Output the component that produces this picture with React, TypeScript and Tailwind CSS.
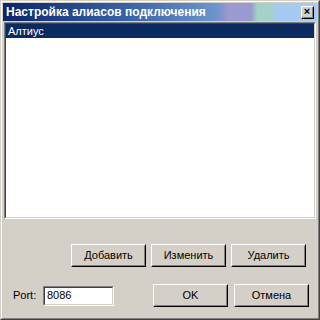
import React from 'react';

const font = { fontFamily: '"Liberation Sans", Arial, sans-serif' };

function Btn({ label, className = '' }: { label: string; className?: string }) {
  return (
    <div
      className={`h-[23px] w-[75px] border border-t-white border-l-white border-r-black border-b-black bg-[#d4d0c8] ${className}`}
    >
      <div className="flex h-full w-full items-center justify-center border border-t-[#d4d0c8] border-l-[#d4d0c8] border-r-[#808080] border-b-[#808080] text-[11px] text-black">
        {label}
      </div>
    </div>
  );
}

export default function App() {
  return (
    <div
      className="h-[320px] w-[320px] border border-t-[#d4d0c8] border-l-[#d4d0c8] border-r-[#404040] border-b-[#404040] bg-[#d4d0c8]"
      style={font}
    >
      <div className="flex h-full w-full flex-col border border-t-white border-l-white border-r-[#808080] border-b-[#808080] p-[1px]">
        {/* Title bar */}
        <div className="flex h-[18px] items-center bg-[linear-gradient(90deg,#0a246a_0%,#3a64a8_40%,#6c94cc_68%,#9a9ad0_72%,#9a9ad0_79%,#a2d2c8_81%,#a2d2c8_85%,#a6caf0_87%,#a6caf0_100%)] pl-[3px] pr-[3px]">
          <span className="flex-1 text-[12px] font-bold leading-none text-white">Настройка алиасов подключения</span>
          <div className="h-[13px] w-[13px] border border-t-white border-l-white border-r-black border-b-black bg-[#d4d0c8]">
            <div className="flex h-full w-full items-center justify-center border-r border-b border-[#808080] text-[11px] font-bold leading-none text-black">
              ×
            </div>
          </div>
        </div>

        {/* List */}
        <div className="mx-[1px] mt-[1px] h-[197px] border border-t-[#808080] border-l-[#808080] border-r-white border-b-white">
          <div className="h-full w-full border border-t-[#404040] border-l-[#404040] border-r-[#d4d0c8] border-b-[#d4d0c8] bg-white">
            <div className="flex h-[14px] items-center bg-[#0a2a60] pl-[2px] text-[11px] text-white">Алтиус</div>
          </div>
        </div>

        {/* Buttons row */}
        <div className="mt-[25px] flex justify-end gap-[5px] pr-[11px]">
          <Btn label="Добавить" />
          <Btn label="Изменить" />
          <Btn label="Удалить" />
        </div>

        {/* Port + OK/Cancel */}
        <div className="mt-[17px] flex items-center pl-[10px] pr-[8px]">
          <span className="w-[30px] text-[11px] text-black">Port:</span>
          <div className="h-[20px] w-[71px] border border-t-[#808080] border-l-[#808080] border-r-white border-b-white">
            <div className="flex h-full w-full items-center border border-t-[#404040] border-l-[#404040] border-r-[#d4d0c8] border-b-[#d4d0c8] bg-white pl-[2px] text-[11px] text-black">
              8086
            </div>
          </div>
          <div className="flex-1" />
          <Btn label="OK" className="mr-[6px]" />
          <Btn label="Отмена" />
        </div>
      </div>
    </div>
  );
}
